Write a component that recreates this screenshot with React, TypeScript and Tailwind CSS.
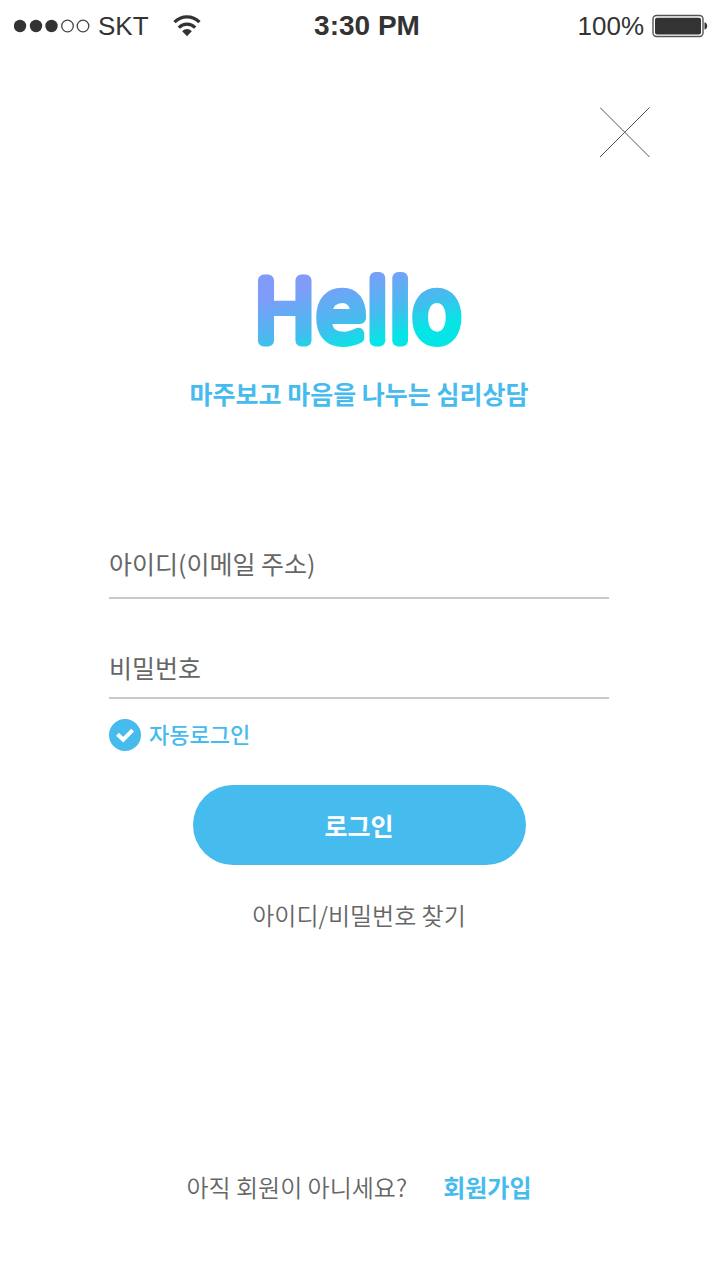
import { useState } from "react";

function SignalDots() {
  return (
    <svg width="76" height="14" viewBox="0 0 76 14" aria-hidden="true">
      {[6, 22, 37.5].map((cx) => (
        <circle key={cx} cx={cx} cy="7" r="6.2" fill="#333" />
      ))}
      {[53.5, 69].map((cx) => (
        <circle key={cx} cx={cx} cy="7" r="5.8" fill="none" stroke="#444" strokeWidth="1.3" />
      ))}
    </svg>
  );
}

function WifiIcon() {
  return (
    <svg width="28" height="22" viewBox="0 0 28 22" fill="none" stroke="#333" aria-hidden="true">
      <path d="M1.5 7.2C8.5 0.2 19.5 0.2 26.5 7.2" strokeWidth="3.3" />
      <path d="M5.8 12.6C10.5 8 17.5 8 22.2 12.6" strokeWidth="3.2" />
      <path d="M9.2 16.2C12 13.3 16 13.3 18.8 16.2L14 21.2Z" fill="#333" stroke="none" />
    </svg>
  );
}

function BatteryIcon() {
  return (
    <svg width="56" height="24" viewBox="0 0 56 24" aria-hidden="true">
      <rect x="1" y="1.5" width="50" height="21" rx="3.5" fill="none" stroke="#555" strokeWidth="1.4" />
      <rect x="3" y="3.7" width="46" height="16.8" rx="2" fill="#333" />
      <path d="M52.5 8.3C54.4 9 55.2 10.2 55.2 12S54.4 15 52.5 15.7Z" fill="#333" />
    </svg>
  );
}

function StatusBar() {
  return (
    <header className="grid h-[52px] grid-cols-[1fr_auto_1fr] items-center pr-3 pl-3.5 text-[26px] leading-8 text-[#333]">
      <div className="flex items-center gap-2">
        <SignalDots />
        <span>SKT</span>
        <span className="pl-4">
          <WifiIcon />
        </span>
      </div>
      <span className="pl-3 text-[28px] font-bold">3:30 PM</span>
      <div className="flex items-center justify-end gap-2">
        <span>100%</span>
        <BatteryIcon />
      </div>
    </header>
  );
}

function Logo() {
  return (
    <svg width="232" height="84" viewBox="0 0 232 84" className="overflow-visible" role="img" aria-label="Hello">
      <defs>
        <linearGradient id="logo-fill" gradientUnits="userSpaceOnUse" x1="100" y1="8" x2="120" y2="84">
          <stop offset="0" stopColor="#7f9cfa" />
          <stop offset="0.55" stopColor="#46bbee" />
          <stop offset="0.9" stopColor="#06e5e5" />
        </linearGradient>
      </defs>
      <text
        x="115"
        y="71"
        textAnchor="middle"
        fontFamily="DejaVu Sans Light, DejaVu Sans, sans-serif"
        fontWeight="200"
        fontSize="82"
        fill="url(#logo-fill)"
        stroke="url(#logo-fill)"
        strokeWidth="12"
        strokeLinejoin="round"
      >
        Hello
      </text>
    </svg>
  );
}

export default function App() {
  const [autoLogin, setAutoLogin] = useState(true);
  const field =
    "block w-full border-b-2 border-[#cacaca] bg-transparent text-[25px] leading-9 text-[#666] outline-none placeholder:text-[#666] placeholder:opacity-100";

  return (
    <div className="flex min-h-screen flex-col bg-white font-['Liberation_Sans','Noto_Sans_CJK_KR',sans-serif]">
      <StatusBar />
      <div className="flex justify-end pt-[55px] pr-[70px]">
        <button type="button" aria-label="닫기" className="cursor-pointer">
          <svg width="50" height="50" viewBox="0 0 50 50" stroke="#555" strokeWidth="1" aria-hidden="true">
            <path d="M0 0.5L49.5 50M49.5 0.5L0 50" />
          </svg>
        </button>
      </div>

      <main className="flex grow flex-col items-center pr-0.5 font-['Noto_Sans_CJK_KR',sans-serif] text-[#666]">
        <h1 className="pt-28 text-[82px] leading-[84px]">
          <Logo />
        </h1>
        <p className="pt-[22px] text-[25px] leading-9 font-bold text-[#46bbee]">마주보고 마음을 나누는 심리상담</p>

        <form
          className="flex w-full max-w-[500px] flex-col items-center pt-[134px]"
          onSubmit={(event) => event.preventDefault()}
        >
          <input type="email" aria-label="아이디(이메일 주소)" placeholder="아이디(이메일 주소)" className={`${field} pb-4`} />
          <input type="password" aria-label="비밀번호" placeholder="비밀번호" className={`${field} mt-[50px] pb-3`} />

          <label className="mt-5 flex cursor-pointer items-start gap-2 self-start text-[22px] leading-7 font-medium text-[#46bbee]">
            <span className="grid size-8">
              <input
                type="checkbox"
                checked={autoLogin}
                onChange={(event) => setAutoLogin(event.target.checked)}
                className="peer col-start-1 row-start-1 size-8 appearance-none rounded-full border-2 border-[#46bbee] checked:bg-[#46bbee]"
              />
              <svg
                viewBox="0 0 32 32"
                className="pointer-events-none invisible col-start-1 row-start-1 size-8 peer-checked:visible"
                fill="none"
                stroke="#fff"
                strokeWidth="4"
                aria-hidden="true"
              >
                <path d="M8.5 15.2L14.2 20.6L23.6 11.2" />
              </svg>
            </span>
            자동로그인
          </label>

          <button
            type="submit"
            className="mt-[34px] h-20 w-full max-w-[333px] cursor-pointer rounded-full bg-[#46bbee] text-[25px] leading-9 font-bold text-white"
          >
            로그인
          </button>
        </form>

        <a href="#find" className="mt-8 text-2xl leading-9 font-[350]">
          아이디/비밀번호 찾기
        </a>

        <p className="mt-auto flex gap-9 pb-[75px] text-2xl leading-9 font-[350]">
          아직 회원이 아니세요?
          <a href="#join" className="font-bold text-[#46bbee]">
            회원가입
          </a>
        </p>
      </main>
    </div>
  );
}
